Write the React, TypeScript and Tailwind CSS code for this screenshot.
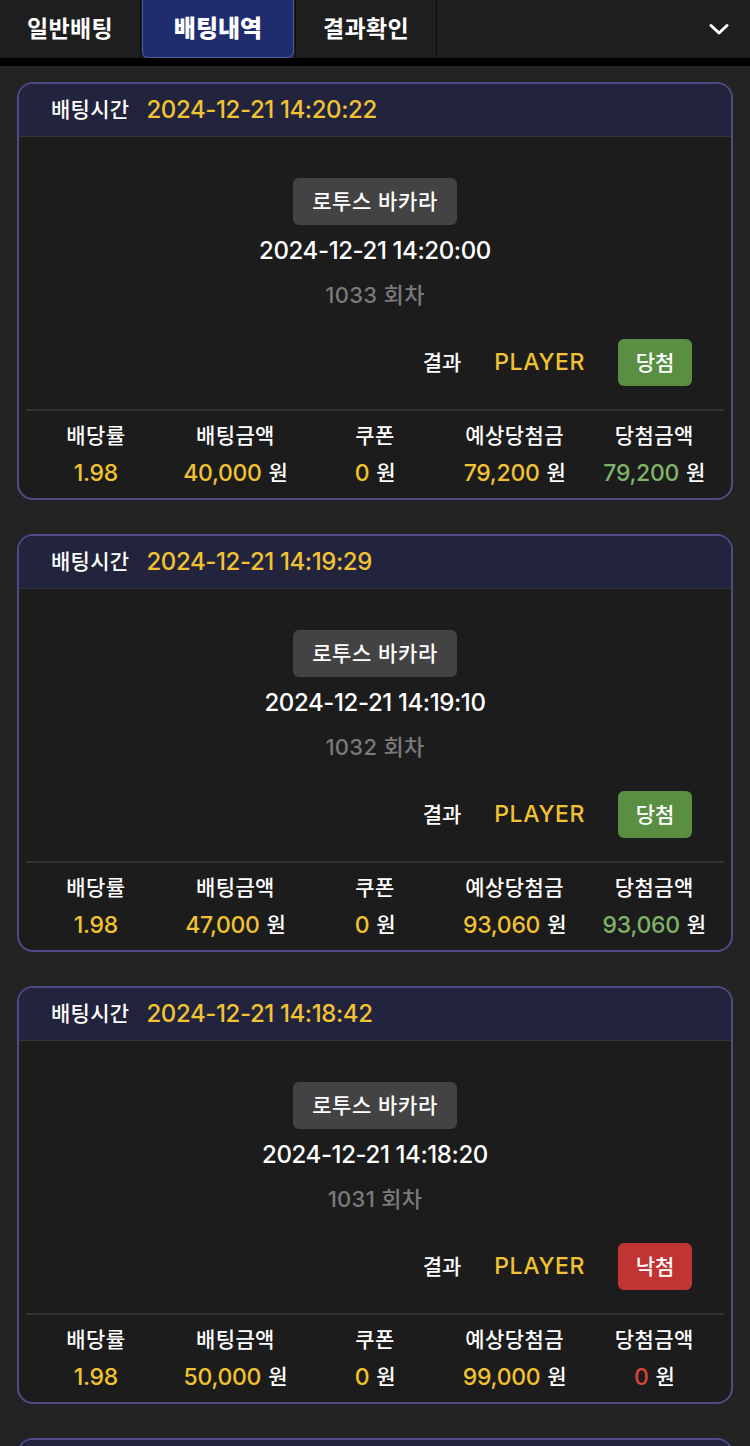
import React from "react";

type Bet = {
  betTime: string;
  gameTime: string;
  round: string;
  result: "당첨" | "낙첨";
  odds: string;
  amount: string;
  expected: string;
  win: string;
};

const bets: Bet[] = [
  { betTime: "2024-12-21 14:20:22", gameTime: "2024-12-21 14:20:00", round: "1033", result: "당첨", odds: "1.98", amount: "40,000", expected: "79,200", win: "79,200" },
  { betTime: "2024-12-21 14:19:29", gameTime: "2024-12-21 14:19:10", round: "1032", result: "당첨", odds: "1.98", amount: "47,000", expected: "93,060", win: "93,060" },
  { betTime: "2024-12-21 14:18:42", gameTime: "2024-12-21 14:18:20", round: "1031", result: "낙첨", odds: "1.98", amount: "50,000", expected: "99,000", win: "0" },
  { betTime: "2024-12-21 14:17:50", gameTime: "2024-12-21 14:17:30", round: "1030", result: "당첨", odds: "1.98", amount: "30,000", expected: "59,400", win: "59,400" },
];

function Card({ b }: { b: Bet }) {
  const won = b.result === "당첨";
  const cols = [
    { label: "배당률", value: b.odds, unit: false, color: "text-[#f1c232]" },
    { label: "배팅금액", value: b.amount, unit: true, color: "text-[#f1c232]" },
    { label: "쿠폰", value: "0", unit: true, color: "text-[#f1c232]" },
    { label: "예상당첨금", value: b.expected, unit: true, color: "text-[#f1c232]" },
    { label: "당첨금액", value: b.win, unit: true, color: won ? "text-[#7fb367]" : "text-[#d8453a]" },
  ];
  return (
    <div className="shrink-0 rounded-[16px] border-2 border-[#4f4b86] overflow-hidden bg-[#1c1c1c]">
      <div className="h-[53px] bg-[#22233d] border-b border-[#363636] flex items-center pl-[32px] gap-[17px]">
        <span className="text-[21px] font-medium text-white tracking-[0.3px]">배팅시간</span>
        <span className="text-[24px] font-medium text-[#f1c232] tracking-[-0.4px]">{b.betTime}</span>
      </div>
      <div className="px-[7px]">
        <div className="flex flex-col items-center pt-[41px]">
          <div className="h-[47px] w-[164px] justify-center rounded-[6px] bg-[#434343] flex items-center text-[21px] font-medium text-white tracking-[0.6px]">
            로투스 바카라
          </div>
          <div className="mt-[11px] h-[30px] flex items-center text-[24px] font-medium text-white tracking-[-0.4px]">
            {b.gameTime}
          </div>
          <div className="mt-[14px] h-[30px] flex items-center text-[22px] font-medium text-[#7a7a7a] tracking-[0.3px]">
            {b.round} 회차
          </div>
        </div>
        <div className="mt-[29px] flex items-center justify-end pr-[32px] h-[47px]">
          <span className="text-[21px] font-medium text-white">결과</span>
          <span className="ml-[33px] text-[23px] font-medium text-[#f1c232] tracking-[0.6px]">PLAYER</span>
          <span
            className={
              "ml-[33px] w-[74px] h-[47px] rounded-[6px] flex items-center justify-center text-[21px] font-medium text-white " +
              (won ? "bg-[#5a8f43]" : "bg-[#c03434]")
            }
          >
            {b.result}
          </span>
        </div>
        <div className="mt-[23px] border-t-2 border-[#333333] grid grid-cols-5 pt-[10px] pb-[10px]">
          {cols.map((c) => (
            <div key={c.label} className="flex flex-col items-center">
              <span className="h-[30px] flex items-center text-[21px] font-medium text-white tracking-[0.4px]">{c.label}</span>
              <span className="mt-[7px] h-[30px] flex items-center text-[23px] font-medium tracking-[-0.3px]">
                <span className={c.color}>{c.value}</span>
                {c.unit && <span className="ml-[7px] text-white text-[21px]">원</span>}
              </span>
            </div>
          ))}
        </div>
      </div>
    </div>
  );
}

export default function App() {
  return (
    <div
      className="w-[750px] h-[1446px] bg-[#232323] overflow-hidden flex flex-col"
      style={{ fontFamily: 'Inter, "Noto Sans CJK KR", "Noto Sans", sans-serif' }}
    >
      <div className="shrink-0 h-[58px] bg-[#1e1e1e] flex items-stretch">
        <div className="w-[141px] flex items-center justify-center text-[23px] font-bold text-white border-r border-[#0d0d0d] tracking-[0.3px]">
          일반배팅
        </div>
        <div className="ml-[1px] w-[152px] flex items-center justify-center text-[24px] font-black text-white bg-[#1f2d6e] border border-t-0 border-[#4c5c9c] rounded-b-[6px]">
          배팅내역
        </div>
        <div className="ml-[1px] w-[142px] flex items-center justify-center text-[23px] font-bold text-white border-l border-r border-[#0d0d0d] tracking-[0.3px]">
          결과확인
        </div>
        <div className="flex-1 flex items-center justify-end pr-[21px]">
          <svg width="20" height="13" viewBox="0 0 20 13" fill="none">
            <path d="M2 2.5 L10 10 L18 2.5" stroke="white" strokeWidth="3" strokeLinecap="round" strokeLinejoin="round" />
          </svg>
        </div>
      </div>
      <div className="shrink-0 h-[8px] bg-black" />
      <div className="px-[17px] pt-[16px] flex flex-col gap-[34px]">
        {bets.map((b) => (
          <Card key={b.betTime} b={b} />
        ))}
      </div>
    </div>
  );
}
